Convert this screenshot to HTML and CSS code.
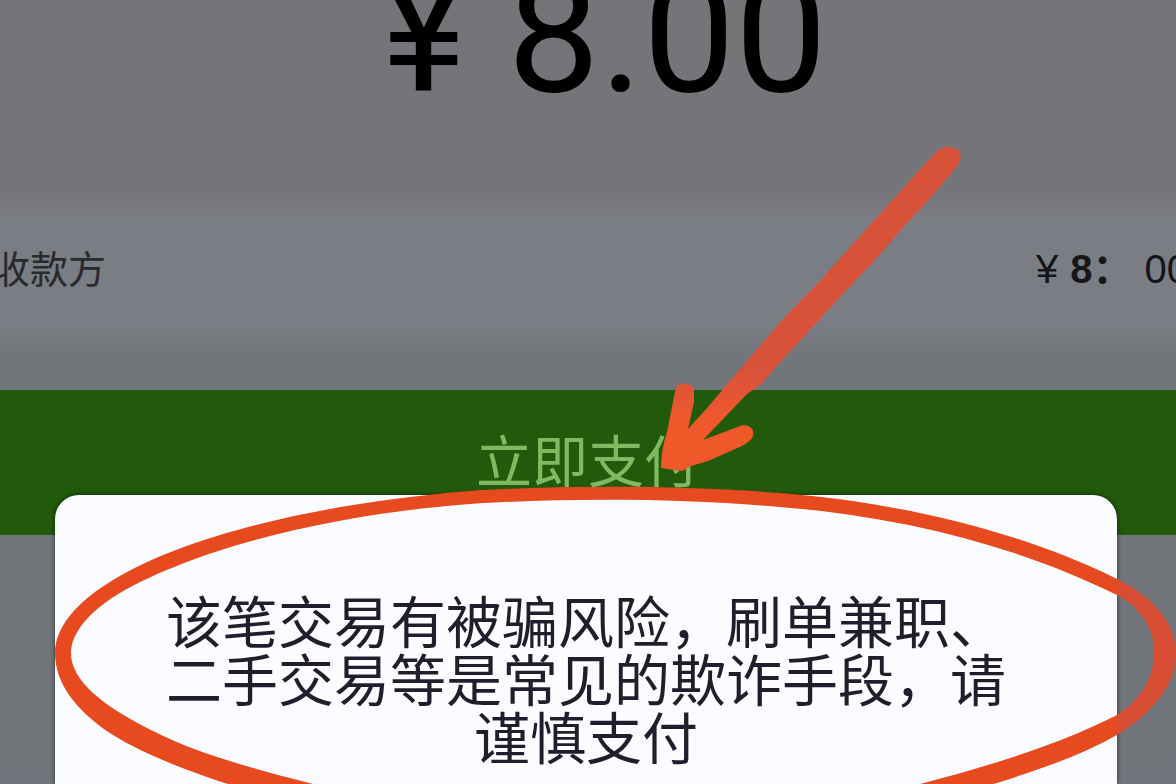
FILE: index.html
```
<!DOCTYPE html>
<html lang="zh-CN">
  <head>
    <meta charset="UTF-8" />
    <meta name="viewport" content="width=device-width, initial-scale=1.0" />
    <title>立即支付</title>
    <link rel="stylesheet" href="styles.css">
  </head>
  <body>
    <main class="screen">
      <div class="amount">¥ 8.00</div>
      <div class="payee">
        <span class="payee-label">收款方</span>
        <span class="payee-value"><span>¥</span><b>8：</b><span>00</span></span>
      </div>
      <button class="pay-button" type="button">立即支付</button>

      <div class="dialog" role="dialog" aria-labelledby="warning">
        <p id="warning">该笔交易有被骗风险，刷单兼职、<br>二手交易等是常见的欺诈手段，请<br>谨慎支付</p>
      </div>

      <svg class="marks" viewBox="0 0 1176 784" preserveAspectRatio="none" aria-hidden="true">
        <defs>
          <linearGradient id="arrowColor" gradientUnits="userSpaceOnUse" x1="0" y1="370" x2="0" y2="420">
            <stop offset="0" stop-color="#d8523a" />
            <stop offset="1" stop-color="#f0582a" />
          </linearGradient>
          <linearGradient id="ringColor" gradientUnits="userSpaceOnUse" x1="1112" y1="0" x2="1122" y2="0">
            <stop offset="0" stop-color="#e84a20" />
            <stop offset="1" stop-color="#d64d34" />
          </linearGradient>
        </defs>
        <!-- ring round the warning -->
        <path fill="url(#ringColor)" fill-rule="evenodd" d="M55 653 C55 628 76 602 113 580 C190 533 330 502 470 491 C560 485 680 485 780 493 C905 503 1020 532 1113 577 C1150 594 1176 622 1176 653 C1176 686 1151 714 1117 735 C1082 755 1041 769 997 783 C850 825 350 825 240 788 C190 772 145 755 113 735 C77 712 55 684 55 653 Z
          M71 653 C71 634 88 612 120 593 C200 547 335 514 470 504 C560 498 680 498 780 507 C905 517 1020 547 1117 595 C1140 607 1154 628 1154 651 C1154 677 1142 699 1117 715 C1060 744 990 766 920 784 C780 820 460 820 313 784 C250 768 194 752 155 732 C104 707 71 681 71 653 Z" />
        <!-- arrow to the pay button -->
        <path fill="url(#arrowColor)" d="M937 151 Q946 144 957 149 Q964 155 958 165 L933 195 L908 222 L873 262 L840 297 L808 332 L783 359 L761 384 L747 394 L724 418 L703 440 L743 425 Q755 426 753 436 Q751 441 742 446 L708 461 L691 466 L682 471 L661 468 Q661 450 667 432 L676 387 Q684 380 694 387 L694 402 L688 429 L708 407 L723 389 L752 355 L783 319 L818 283 L853 244 L888 205 L915 175 Z" />
      </svg>
    </main>
  </body>
</html>
```
FILE: styles.css
```
* {
  box-sizing: border-box;
}
body {
  margin: 0;
  font-family: "Noto Sans CJK SC", sans-serif;
  color: #15151a;
}
.screen {
  position: relative;
  display: flex;
  flex-direction: column;
  min-height: 100vh;
  overflow: hidden;
  background: linear-gradient(#737578 0, #737579 190px, #7b7d84 220px, #7b7d84 325px, #72757a 350px, #72757b 100%);
}
.amount {
  height: 150px;
  padding-left: 32px;
  font-family: Roboto, sans-serif;
  font-size: 164px;
  line-height: 70px;
  text-align: center;
  color: #000;
}
.payee {
  display: flex;
  justify-content: space-between;
  align-items: center;
  height: 240px;
  margin: 0 -20px 0 -8px;
  padding-bottom: 8px;
  white-space: nowrap;
}
.payee-label {
  font-size: 38px;
  color: #292a2e;
}
.payee-value {
  display: flex;
  align-items: baseline;
  gap: 12px;
  width: 160px;
  font-family: "Liberation Sans", "Noto Sans CJK SC", sans-serif;
  font-size: 40px;
}
.pay-button {
  width: 100%;
  height: 145px;
  padding: 0 0 10px;
  border: none;
  background-color: #225a0b;
  color: #7fba60;
  font-family: inherit;
  font-size: 56px;
  font-weight: 400;
  cursor: pointer;
}
.dialog {
  position: absolute;
  top: 495px;
  right: 5%;
  bottom: 0;
  left: 55px;
  padding-top: 95px;
  border-radius: 24px 24px 0 0;
  background-color: #fbfcff;
  box-shadow: 0 0 5px rgba(0, 0, 0, 0.6);
}
.dialog p {
  margin: 0;
  font-size: 56px;
  line-height: 58px;
  text-align: center;
  white-space: nowrap;
  color: #211d2c;
}
.marks {
  position: absolute;
  top: 0;
  left: 0;
  width: 100%;
  height: 100%;
  pointer-events: none;
}
```
